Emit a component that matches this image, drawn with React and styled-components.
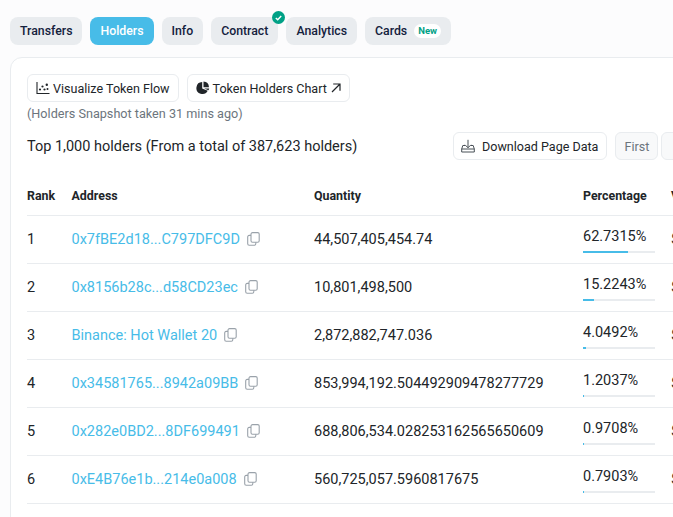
import React from 'react';
import styled, { createGlobalStyle } from 'styled-components';

const GlobalStyle = createGlobalStyle`
	html, body {
		margin: 0;
		height: 100%;
		overflow: hidden;
		background: #fcfcfd;
		font-family: Roboto, "Liberation Sans", sans-serif;
		color: #212529;
	}
`;

const Page = styled.div`
	width: 900px;
	padding: 17px 0 0 10px;
`;

const Tabs = styled.div`
	display: flex;
	gap: 8px;
	margin-bottom: 12px;
`;

const Tab = styled.div`
	position: relative;
	display: flex;
	align-items: center;
	gap: 7px;
	height: 28px;
	padding: 0 10px;
	border-radius: 8px;
	font-size: 12.3px;
	font-weight: 500;
	background: ${props => (props.$active ? '#47bce8' : '#e9ecef')};
	color: ${props => (props.$active ? '#fff' : '#14213d')};
`;

const NewBadge = styled.span`
	padding: 1px 4px;
	border-radius: 7px;
	background: #fff;
	color: #00a186;
	font-size: 9.5px;
	font-weight: 700;
	line-height: 12px;
`;

const CheckBadge = styled.span`
	position: absolute;
	top: -6px;
	right: -7px;
	width: 13px;
	height: 13px;
	border-radius: 50%;
	background: #00a186;
	display: flex;
	align-items: center;
	justify-content: center;
`;

const Card = styled.div`
	width: 860px;
	min-height: 600px;
	padding: 16px;
	border: 1px solid #e9ecef;
	border-radius: 12px;
	box-sizing: border-box;
	background: #fff;
`;

const ButtonRow = styled.div`
	display: flex;
	gap: 8px;
`;

const OutlineButton = styled.div`
	display: flex;
	align-items: center;
	gap: 3px;
	height: 28px;
	padding: 0 8px;
	border: 1px solid #e9ecef;
	border-radius: 6px;
	box-sizing: border-box;
	background: #fff;
	font-size: 12.55px;
	color: #212529;
	white-space: nowrap;
`;

const Snapshot = styled.div`
	margin-top: 3px;
	font-size: 12.65px;
	line-height: 18px;
	color: #6c757d;
`;

const SummaryRow = styled.div`
	display: flex;
	align-items: center;
	justify-content: space-between;
	margin-top: 9px;
	height: 28px;
`;

const Summary = styled.div`
	font-size: 14.5px;
	white-space: nowrap;
`;

const SummaryActions = styled.div`
	display: flex;
	gap: 8px;
	width: 400px;
`;

const DownloadButton = styled(OutlineButton)`
	gap: 7px;
	padding: 0 8px 0 7px;
`;

const PagerButton = styled.div`
	display: flex;
	align-items: center;
	height: 28px;
	padding: 0 8px;
	border: 1px solid #e9ecef;
	border-radius: 6px;
	box-sizing: border-box;
	background: #f8f9fa;
	color: #6c757d;
	font-size: 12.55px;
	min-width: ${props => props.$min || 0}px;
`;

const PagerGroup = styled.div`
	display: flex;
	gap: 3px;
`;

const Table = styled.table`
	border-collapse: collapse;
	table-layout: fixed;
	width: 828px;
	margin-top: 16px;
`;

const Th = styled.th`
	height: 39px;
	padding: 0;
	text-align: left;
	font-size: 12.4px;
	font-weight: 700;
	color: #212529;
	border-bottom: 1px solid #e9ecef;
	box-sizing: border-box;
`;

const Td = styled.td`
	height: 48px;
	padding: 0;
	font-size: 14.5px;
	color: #212529;
	border-bottom: 1px solid #e9ecef;
	box-sizing: border-box;
	white-space: nowrap;
`;

const AddressCell = styled.div`
	display: flex;
	align-items: center;
	gap: 7px;
`;

const AddressLink = styled.span`
	color: #47bce8;
`;

const PercentText = styled.div`
	line-height: 17px;
	padding-top: 3px;
`;

const Progress = styled.div`
	width: 72px;
	height: 2px;
	margin-top: 6px;
	background: #e9ecef;
`;

const ProgressFill = styled.div`
	height: 100%;
	background: #47bce8;
`;

const ChartIcon = () => (
	<svg width="14" height="14" viewBox="0 0 14 14" fill="none" stroke="#212529">
		<path d="M1 1V12.5H13.5" strokeWidth="1.1" />
		<circle cx="4" cy="8.5" r="1.1" fill="#212529" stroke="none" />
		<circle cx="6.5" cy="5.5" r="1.1" fill="#212529" stroke="none" />
		<circle cx="8.5" cy="8.5" r="1.1" fill="#212529" stroke="none" />
		<circle cx="10.8" cy="3.8" r="1.2" fill="#212529" stroke="none" />
		<circle cx="11.5" cy="8" r="1" fill="#212529" stroke="none" />
	</svg>
);

const PieIcon = () => (
	<svg width="14" height="14" viewBox="0 0 14 14" fill="#212529">
		<path d="M6.2 1A6 6 0 1 0 11.7 9.8L6.2 7.6Z" />
		<path d="M7.5 0.6A6 6 0 0 1 13 6.2L7.5 6.2Z" />
		<path d="M8.2 7.4L13.2 7.4A6 6 0 0 1 12.4 9.2Z" />
	</svg>
);

const ArrowIcon = () => (
	<svg width="10" height="10" viewBox="0 0 10 10" fill="none" stroke="#212529" strokeWidth="1.2" style={{ marginLeft: 1 }}>
		<path d="M1 9L9 1M2.2 1H9V7.8" />
	</svg>
);

const DownloadIcon = () => (
	<svg width="14" height="14" viewBox="0 0 14 14" fill="none" stroke="#495057" strokeWidth="1">
		<path d="M7 0.8V8.6M4 5.8L7 8.8L10 5.8" />
		<path d="M4 6.5H1.8L0.7 10V13H13.3V10L12.2 6.5H10M0.7 10H13.3" />
	</svg>
);

const CheckIcon = () => (
	<svg width="7" height="6" viewBox="0 0 7 6" fill="none" stroke="#fff" strokeWidth="1.4">
		<path d="M0.8 3L2.7 4.8L6.2 1" />
	</svg>
);

const CopyIcon = () => (
	<svg width="13" height="14" viewBox="0 0 13 14" fill="none" stroke="#9aa2aa" strokeWidth="1.1">
		<rect x="4" y="0.6" width="8.2" height="9.6" rx="1.5" />
		<path d="M4 3.4H2.2C1.3 3.4 0.7 4 0.7 4.9V11.8C0.7 12.7 1.3 13.3 2.2 13.3H7.3C8.2 13.3 8.8 12.7 8.8 11.8V10.2" />
	</svg>
);

const holders = [
	{ rank: 1, address: '0x7fBE2d18...C797DFC9D', quantity: '44,507,405,454.74', percent: '62.7315%', fill: 62.73 },
	{ rank: 2, address: '0x8156b28c...d58CD23ec', quantity: '10,801,498,500', percent: '15.2243%', fill: 15.22 },
	{ rank: 3, address: 'Binance: Hot Wallet 20', quantity: '2,872,882,747.036', percent: '4.0492%', fill: 4.05 },
	{ rank: 4, address: '0x34581765...8942a09BB', quantity: '853,994,192.504492909478277729', percent: '1.2037%', fill: 1.2 },
	{ rank: 5, address: '0x282e0BD2...8DF699491', quantity: '688,806,534.028253162565650609', percent: '0.9708%', fill: 0.97 },
	{ rank: 6, address: '0xE4B76e1b...214e0a008', quantity: '560,725,057.5960817675', percent: '0.7903%', fill: 0.79 },
];

export default function App() {
	return (
		<Page>
			<GlobalStyle />
			<Tabs>
				<Tab>Transfers</Tab>
				<Tab $active>Holders</Tab>
				<Tab>Info</Tab>
				<Tab>
					Contract
					<CheckBadge><CheckIcon /></CheckBadge>
				</Tab>
				<Tab>Analytics</Tab>
				<Tab>
					Cards
					<NewBadge>New</NewBadge>
				</Tab>
			</Tabs>
			<Card>
				<ButtonRow>
					<OutlineButton><ChartIcon />Visualize Token Flow</OutlineButton>
					<OutlineButton><PieIcon />Token Holders Chart<ArrowIcon /></OutlineButton>
				</ButtonRow>
				<Snapshot>(Holders Snapshot taken 31 mins ago)</Snapshot>
				<SummaryRow>
					<Summary>Top 1,000 holders (From a total of 387,623 holders)</Summary>
					<SummaryActions>
						<DownloadButton><DownloadIcon />Download Page Data</DownloadButton>
						<PagerGroup>
							<PagerButton>First</PagerButton>
							<PagerButton $min={30} />
						</PagerGroup>
					</SummaryActions>
				</SummaryRow>
				<Table>
					<colgroup>
						<col style={{ width: 44.5 }} />
						<col style={{ width: 242.5 }} />
						<col style={{ width: 269 }} />
						<col style={{ width: 88 }} />
						<col />
					</colgroup>
					<thead>
						<tr>
							<Th>Rank</Th>
							<Th>Address</Th>
							<Th>Quantity</Th>
							<Th>Percentage</Th>
							<Th>Value</Th>
						</tr>
					</thead>
					<tbody>
						{holders.map(h => (
							<tr key={h.rank}>
								<Td>{h.rank}</Td>
								<Td>
									<AddressCell>
										<AddressLink>{h.address}</AddressLink>
										<CopyIcon />
									</AddressCell>
								</Td>
								<Td>{h.quantity}</Td>
								<Td>
									<PercentText>{h.percent}</PercentText>
									<Progress>
										<ProgressFill style={{ width: `${h.fill}%` }} />
									</Progress>
								</Td>
								<Td>$0</Td>
							</tr>
						))}
					</tbody>
				</Table>
			</Card>
		</Page>
	);
}
